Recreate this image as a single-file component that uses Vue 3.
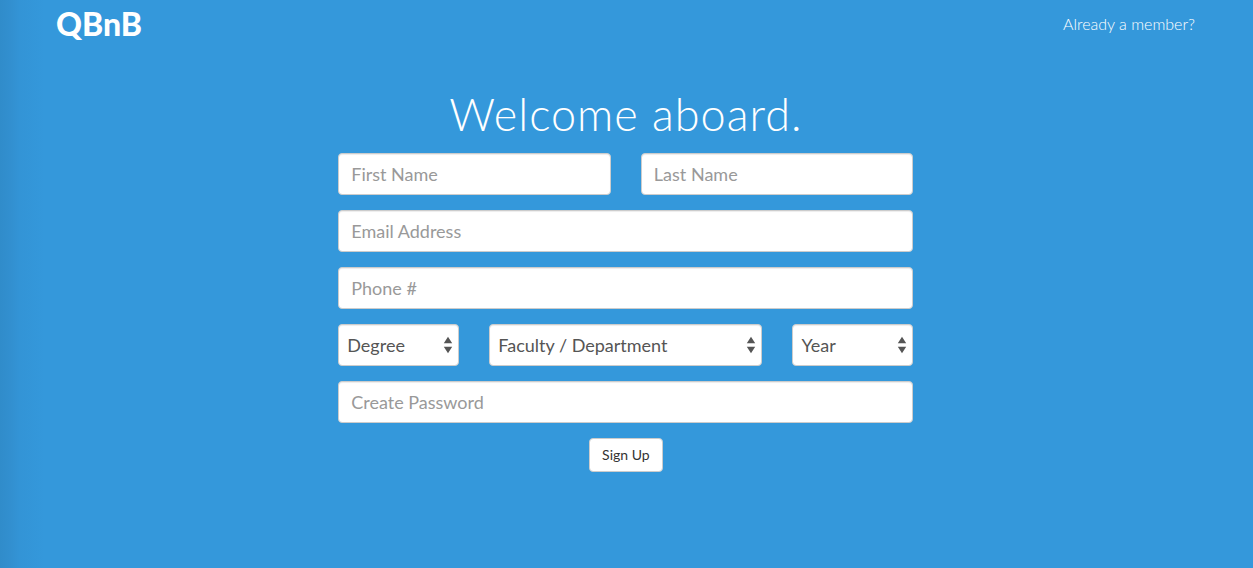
<script setup>
import { ref } from 'vue'

const degree = ref('')
const faculty = ref('')
const year = ref('')
</script>

<template>
  <div class="page">
    <header class="bar">
      <a class="brand" href="#">QBnB</a>
      <a class="member" href="#">Already a member?</a>
    </header>
    <main class="signup">
      <h1>Welcome aboard.</h1>
      <form class="form" @submit.prevent>
        <div class="row names">
          <input class="control" type="text" placeholder="First Name" aria-label="First Name">
          <input class="control" type="text" placeholder="Last Name" aria-label="Last Name">
        </div>
        <input class="control" type="email" placeholder="Email Address" aria-label="Email Address">
        <input class="control" type="tel" placeholder="Phone #" aria-label="Phone number">
        <div class="row study">
          <div class="pick">
            <select v-model="degree" class="control" aria-label="Degree"><option value="">Degree</option></select>
            <svg class="arrows" viewBox="0 0 10 18" aria-hidden="true"><path d="M5 .7 9.2 7.2H.8ZM5 17.3 .8 10.8H9.2Z" /></svg>
          </div>
          <div class="pick">
            <select v-model="faculty" class="control" aria-label="Faculty or department"><option value="">Faculty / Department</option></select>
            <svg class="arrows" viewBox="0 0 10 18" aria-hidden="true"><path d="M5 .7 9.2 7.2H.8ZM5 17.3 .8 10.8H9.2Z" /></svg>
          </div>
          <div class="pick">
            <select v-model="year" class="control" aria-label="Year"><option value="">Year</option></select>
            <svg class="arrows" viewBox="0 0 10 18" aria-hidden="true"><path d="M5 .7 9.2 7.2H.8ZM5 17.3 .8 10.8H9.2Z" /></svg>
          </div>
        </div>
        <input class="control" type="password" placeholder="Create Password" aria-label="Create Password">
        <button class="submit" type="submit">Sign Up</button>
      </form>
    </main>
  </div>
</template>

<style>
body {
  background: #3498db;
}
</style>

<style scoped>
.page {
  min-height: 100vh;
  background: linear-gradient(to right, #308cca 0, #328fcf 10px, #3394d6 20px, #3498db 44px);
  font-family: Lato, sans-serif;
  color: #fff;
}
.bar {
  display: flex;
  justify-content: space-between;
  align-items: center;
  height: 48px;
  padding: 0 58px 0 56px;
}
.bar a {
  color: inherit;
  text-decoration: none;
}
.brand {
  font-size: 32px;
  line-height: 48px;
  font-weight: 900;
}
.member {
  font-size: 16px;
  line-height: 20px;
  font-weight: 300;
}
.signup {
  width: 45.9%;
  min-width: 300px;
  margin-left: 27%;
  padding-top: 40px;
}
h1 {
  margin: 0 0 12px;
  font-size: 45px;
  line-height: 53px;
  font-weight: 300;
  letter-spacing: 1px;
  text-align: center;
}
.form {
  display: flex;
  flex-direction: column;
  gap: 15px;
}
.row {
  display: grid;
  gap: 30px;
}
.names {
  grid-template-columns: 1fr 1fr;
}
.study {
  grid-template-columns: 121px 1fr 121px;
}
.pick {
  position: relative;
}
.control {
  display: block;
  box-sizing: border-box;
  width: 100%;
  min-width: 0;
  height: 42px;
  margin: 0;
  padding: 0 12px;
  border: 1px solid #ccc;
  border-radius: 4px;
  background: #fff;
  box-shadow: inset 0 1px 1px rgba(0, 0, 0, 0.075);
  font-family: inherit;
  font-size: 18px;
  color: #555;
}
.control::placeholder {
  color: #999;
  opacity: 1;
}
select.control {
  appearance: none;
  padding: 0 20px 0 8px;
}
.arrows {
  position: absolute;
  right: 6px;
  top: 12px;
  width: 10px;
  height: 18px;
  fill: #555;
  pointer-events: none;
}
.submit {
  align-self: center;
  height: 34px;
  padding: 0 12px 2px;
  border: 1px solid #ccc;
  border-radius: 4px;
  background: #fff;
  font-family: inherit;
  font-size: 14px;
  color: #333;
}
</style>
